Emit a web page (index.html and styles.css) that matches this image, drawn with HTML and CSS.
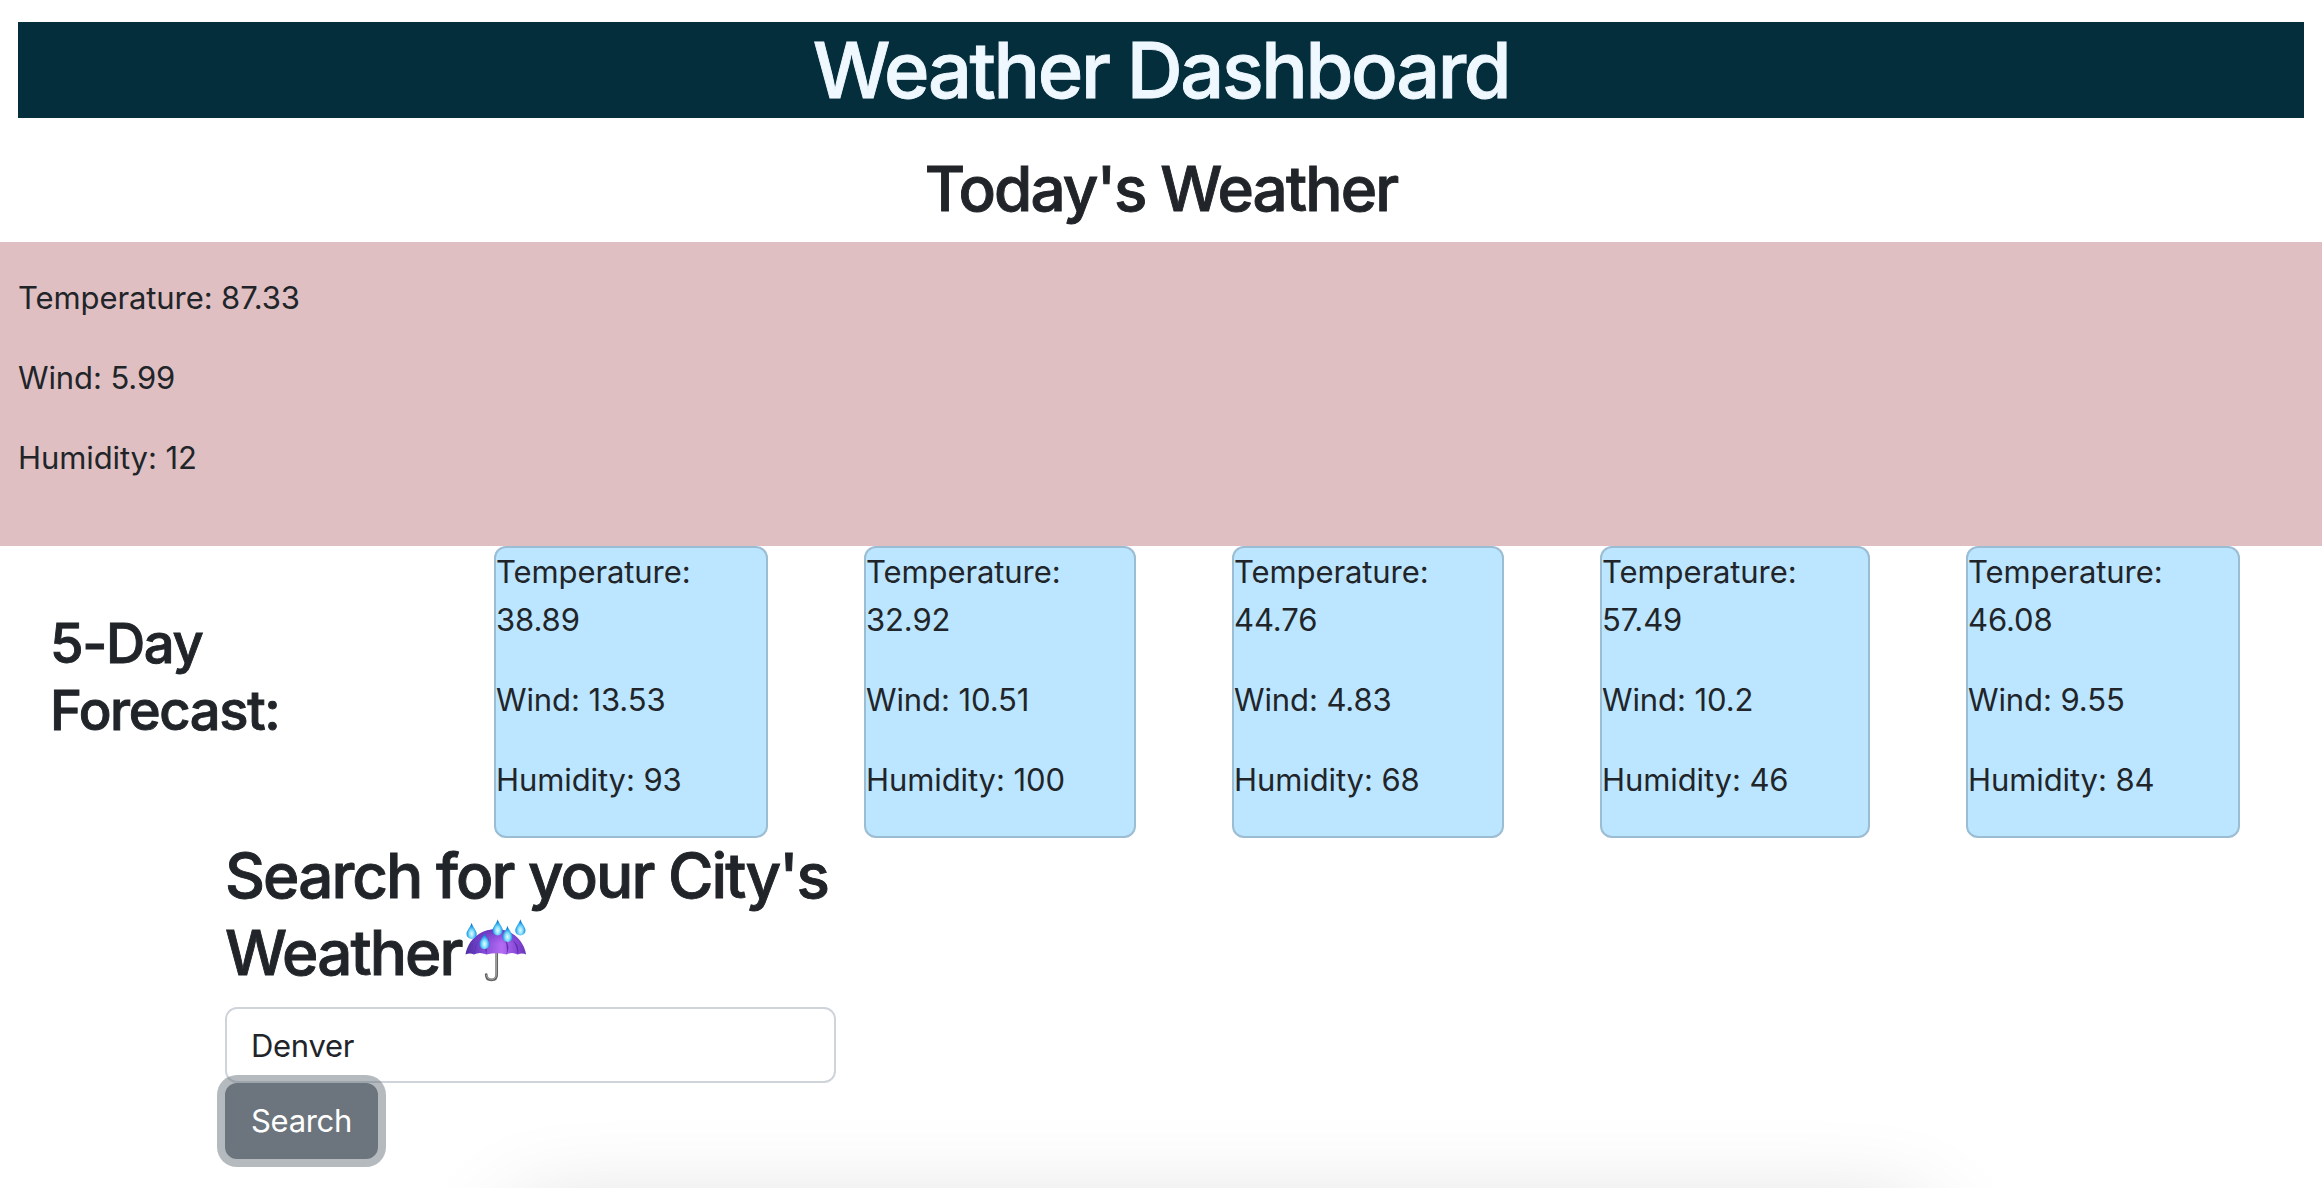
FILE: index.html
```html
<!DOCTYPE html>
<html lang="en">
<head>
<meta charset="utf-8">
<title>Weather Dashboard</title>
<link rel="stylesheet" href="styles.css">
</head>
<body>
<header class="banner"><h1>Weather Dashboard</h1></header>
<h2 class="today-title">Today's Weather</h2>
<section class="today">
  <p>Temperature: 87.33</p>
  <p>Wind: 5.99</p>
  <p>Humidity: 12</p>
</section>
<section class="forecast">
  <h3>5-Day Forecast:</h3>
  <div class="card"><p>Temperature: 38.89</p><p>Wind: 13.53</p><p>Humidity: 93</p></div>
  <div class="card"><p>Temperature: 32.92</p><p>Wind: 10.51</p><p>Humidity: 100</p></div>
  <div class="card"><p>Temperature: 44.76</p><p>Wind: 4.83</p><p>Humidity: 68</p></div>
  <div class="card"><p>Temperature: 57.49</p><p>Wind: 10.2</p><p>Humidity: 46</p></div>
  <div class="card"><p>Temperature: 46.08</p><p>Wind: 9.55</p><p>Humidity: 84</p></div>
</section>
<form class="search">
  <h2>Search for your City's Weather<svg class="umbrella" viewBox="80 62 182 186" aria-hidden="true">
    <defs>
      <linearGradient id="canopy" x1="0" x2="1" y1="0" y2="0">
        <stop offset="0" stop-color="#4a2ea4"/><stop offset=".25" stop-color="#7a45cf"/><stop offset=".6" stop-color="#b56cf5"/><stop offset=".85" stop-color="#8647d6"/><stop offset="1" stop-color="#6a35b8"/>
      </linearGradient>
      <linearGradient id="shade" x1="0" x2="0" y1="0" y2="1">
        <stop offset="0" stop-color="#5a25ad" stop-opacity=".75"/><stop offset=".6" stop-color="#7a3fd0" stop-opacity="0"/>
      </linearGradient>
      <radialGradient id="water" cx=".5" cy=".68" r=".55">
        <stop offset="0" stop-color="#e4fbff"/><stop offset=".4" stop-color="#8fe0fb"/><stop offset=".8" stop-color="#22a2ea"/><stop offset="1" stop-color="#0b78cc"/>
      </radialGradient>
      <path id="drop" d="M0-24C3-11 15-2 15 9A15 15 0 0 1-15 9C-15-2-3-11 0-24Z" fill="url(#water)"/>
    </defs>
    <path d="M173 160V226Q173 242 158 242Q142 242 142 226" fill="none" stroke="#626262" stroke-width="8" stroke-linecap="round"/>
    <path d="M172 162V226Q171 240 158 240Q145 240 143 228" fill="none" stroke="#b5b5b5" stroke-width="2.5" stroke-linecap="round"/>
    <path d="M81 167C88 122 126 92 171 92C218 92 253 124 260 167Q248 160 235 167Q219 158 202 167Q172 159 143 167Q122 158 106 167Q94 160 81 167Z" fill="url(#canopy)"/>
    <path d="M81 167C88 122 126 92 171 92C218 92 253 124 260 167Q248 160 235 167Q219 158 202 167Q172 159 143 167Q122 158 106 167Q94 160 81 167Z" fill="url(#shade)"/>
    <path d="M106 167Q108 142 122 122Q112 138 106 167ZM143 167Q142 142 150 120Q132 140 143 167ZM202 167Q206 140 196 120Q216 142 202 167ZM235 167Q234 142 220 124Q242 140 235 167Z" fill="#4d239d" opacity=".75"/>
    <use href="#drop" x="99" y="97"/><use href="#drop" x="176" y="87"/><use href="#drop" x="243" y="87"/><use href="#drop" x="205" y="106"/><use href="#drop" x="137" y="127"/>
  </svg></h2>
  <input class="city" type="text" value="Denver" aria-label="City">
  <button class="submit" type="button">Search</button>
</form>
<div class="glow"></div>
</body>
</html>
```
FILE: styles.css
```css
* { box-sizing: border-box; }

body {
  position: relative;
  height: 1188px;
  margin: 0;
  overflow: hidden;
  background: #fff;
  color: #212529;
  font: 400 31px/48px Inter, "Liberation Sans", sans-serif;
}

h1, h2, h3 { margin: 0; font-weight: 500; -webkit-text-stroke: 0.9px currentColor; }
p { margin: 0 0 32px; letter-spacing: -0.003em; }

.banner {
  height: 96px;
  margin: 22px 18px 0;
  background: #042e3b;
  color: #f0f8ff;
  text-align: center;
}

h1 { font-size: 77.5px; line-height: 97px; letter-spacing: -0.031em; }

h2 { font-size: 62px; line-height: 76.8px; letter-spacing: -0.0315em; }

.today-title { height: 124px; padding-top: 33px; text-align: center; letter-spacing: -0.03em; }

.today {
  height: 304px;
  padding: 32px 18px;
  background: #dfbfc1;
}

.forecast {
  display: grid;
  grid-template-columns: 398px 274px 272px 272px 270px 274px;
  column-gap: 96px;
  height: 292px;
}

.forecast h3 {
  padding: 64px 80px 0 50px;
  font-size: 54.3px;
  line-height: 67.2px;
  letter-spacing: -0.025em;
}

.card {
  border: 2px solid #9bbdd3;
  border-radius: 12px;
  background: #bce5ff;
}

.search {
  display: flex;
  flex-direction: column;
  align-items: flex-start;
  width: 612px;
  margin-left: 225px;
}

.search h2 { height: 169px; }

.umbrella {
  width: 62px;
  height: 63px;
  margin-left: 4px;
  vertical-align: -7px;
}

.city {
  width: 611px;
  height: 76px;
  padding: 12px 24px;
  border: 2px solid #ced4da;
  border-radius: 12px;
  background: #fff;
  color: inherit;
  font: inherit;
  letter-spacing: -0.01em;
}

.submit {
  width: 153px;
  height: 76px;
  padding: 12px 0;
  border: 2px solid #6c757d;
  border-radius: 12px;
  background: #6c757d;
  color: #fff;
  font: inherit;
  letter-spacing: -0.01em;
  box-shadow: 0 0 0 8px rgba(108, 117, 125, 0.5);
}

.glow {
  position: absolute;
  bottom: 0;
  left: 400px;
  width: 1640px;
  height: 88px;
  overflow: hidden;
  pointer-events: none;
}

.glow::before {
  content: "";
  display: block;
  height: 100px;
  margin: 118px 115px 0;
  border-radius: 20px 20px 0 0;
  box-shadow: 0 0 100px rgba(0, 0, 0, 0.19), 0 80px 100px rgba(0, 0, 0, 0.1);
}
```
